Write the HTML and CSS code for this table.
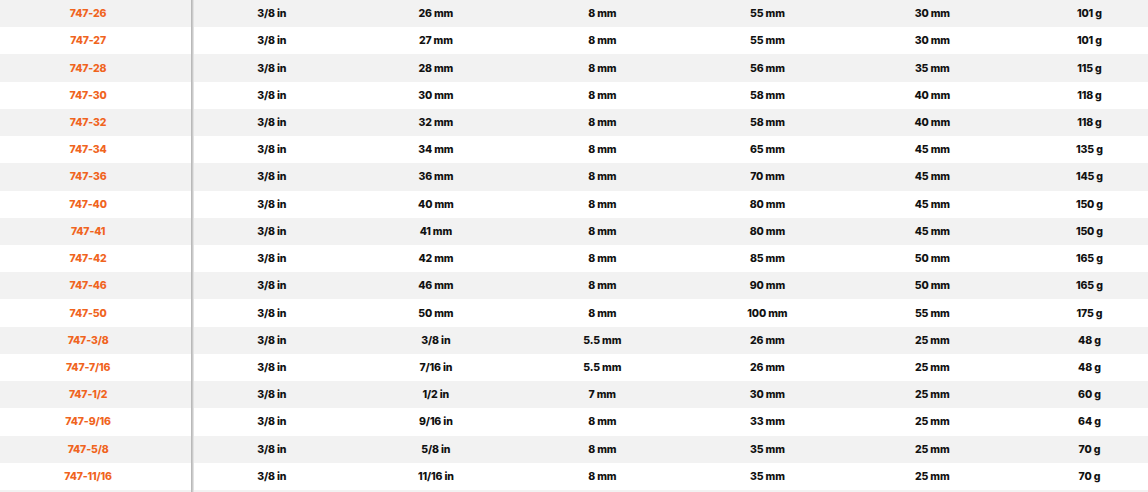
FILE: index.html
```html
<!DOCTYPE html>
<html>
<head>
<meta charset="utf-8">
<link rel="stylesheet" href="styles.css">
</head>
<body>
<div class="wrap">
<table class="specs">
<colgroup>
<col class="c1"><col class="c2"><col class="c3"><col class="c4"><col class="c5"><col class="c6"><col class="c7">
</colgroup>
<tbody>
<tr><td class="ref">747-26</td><td class="d2">3/8 in</td><td>26 mm</td><td>8 mm</td><td>55 mm</td><td class="d6">30 mm</td><td class="d7">101 g</td></tr>
<tr><td class="ref">747-27</td><td class="d2">3/8 in</td><td>27 mm</td><td>8 mm</td><td>55 mm</td><td class="d6">30 mm</td><td class="d7">101 g</td></tr>
<tr><td class="ref">747-28</td><td class="d2">3/8 in</td><td>28 mm</td><td>8 mm</td><td>56 mm</td><td class="d6">35 mm</td><td class="d7">115 g</td></tr>
<tr><td class="ref">747-30</td><td class="d2">3/8 in</td><td>30 mm</td><td>8 mm</td><td>58 mm</td><td class="d6">40 mm</td><td class="d7">118 g</td></tr>
<tr><td class="ref">747-32</td><td class="d2">3/8 in</td><td>32 mm</td><td>8 mm</td><td>58 mm</td><td class="d6">40 mm</td><td class="d7">118 g</td></tr>
<tr><td class="ref">747-34</td><td class="d2">3/8 in</td><td>34 mm</td><td>8 mm</td><td>65 mm</td><td class="d6">45 mm</td><td class="d7">135 g</td></tr>
<tr><td class="ref">747-36</td><td class="d2">3/8 in</td><td>36 mm</td><td>8 mm</td><td>70 mm</td><td class="d6">45 mm</td><td class="d7">145 g</td></tr>
<tr><td class="ref">747-40</td><td class="d2">3/8 in</td><td>40 mm</td><td>8 mm</td><td>80 mm</td><td class="d6">45 mm</td><td class="d7">150 g</td></tr>
<tr><td class="ref">747-41</td><td class="d2">3/8 in</td><td>41 mm</td><td>8 mm</td><td>80 mm</td><td class="d6">45 mm</td><td class="d7">150 g</td></tr>
<tr><td class="ref">747-42</td><td class="d2">3/8 in</td><td>42 mm</td><td>8 mm</td><td>85 mm</td><td class="d6">50 mm</td><td class="d7">165 g</td></tr>
<tr><td class="ref">747-46</td><td class="d2">3/8 in</td><td>46 mm</td><td>8 mm</td><td>90 mm</td><td class="d6">50 mm</td><td class="d7">165 g</td></tr>
<tr><td class="ref">747-50</td><td class="d2">3/8 in</td><td>50 mm</td><td>8 mm</td><td>100 mm</td><td class="d6">55 mm</td><td class="d7">175 g</td></tr>
<tr><td class="ref">747-3/8</td><td class="d2">3/8 in</td><td>3/8 in</td><td>5.5 mm</td><td>26 mm</td><td class="d6">25 mm</td><td class="d7">48 g</td></tr>
<tr><td class="ref">747-7/16</td><td class="d2">3/8 in</td><td>7/16 in</td><td>5.5 mm</td><td>26 mm</td><td class="d6">25 mm</td><td class="d7">48 g</td></tr>
<tr><td class="ref">747-1/2</td><td class="d2">3/8 in</td><td>1/2 in</td><td>7 mm</td><td>30 mm</td><td class="d6">25 mm</td><td class="d7">60 g</td></tr>
<tr><td class="ref">747-9/16</td><td class="d2">3/8 in</td><td>9/16 in</td><td>8 mm</td><td>33 mm</td><td class="d6">25 mm</td><td class="d7">64 g</td></tr>
<tr><td class="ref">747-5/8</td><td class="d2">3/8 in</td><td>5/8 in</td><td>8 mm</td><td>35 mm</td><td class="d6">25 mm</td><td class="d7">70 g</td></tr>
<tr><td class="ref">747-11/16</td><td class="d2">3/8 in</td><td>11/16 in</td><td>8 mm</td><td>35 mm</td><td class="d6">25 mm</td><td class="d7">70 g</td></tr>
<tr class="peek"><td class="ref"></td><td></td><td></td><td></td><td></td><td></td><td></td></tr>
</tbody>
</table>
</div>
</body>
</html>
```

FILE: styles.css
```css
html, body {
  margin: 0;
  padding: 0;
  background: #ffffff;
  overflow: hidden;
}

.wrap {
  width: 1148px;
  height: 492px;
  overflow: hidden;
}

.specs {
  border-collapse: collapse;
  table-layout: fixed;
  width: 1168px;
  font-family: "Inter", "Liberation Sans", sans-serif;
  font-weight: 800;
  font-size: 10.5px;
  letter-spacing: -0.15px;
  color: #111111;
}

.c1 { width: 194px; }
.c2 { width: 158px; }
.c3 { width: 167px; }
.c4 { width: 165.5px; }
.c5 { width: 164.5px; }
.c6 { width: 161px; }
.c7 { width: 157px; }

.specs tr {
  height: 27.22px;
}

.specs tr:nth-child(odd) td {
  background-color: #f2f2f2;
}

.specs td {
  padding: 0;
  text-align: center;
  vertical-align: middle;
  white-space: nowrap;
  line-height: 13px;
}

.specs td.ref {
  color: #f0641e;
  padding-right: 18px;
  background-image: linear-gradient(to right,
    transparent 191px,
    #b9b9b9 191px, #b9b9b9 192px,
    #cacaca 192px, #cacaca 193px,
    #e2e2e2 193px, #e2e2e2 194px);
}

.specs td.d2 {
  padding-right: 3px;
}

.specs td.d6 {
  padding-left: 4px;
}

.specs td.d7 {
  padding-left: 0;
}
```
